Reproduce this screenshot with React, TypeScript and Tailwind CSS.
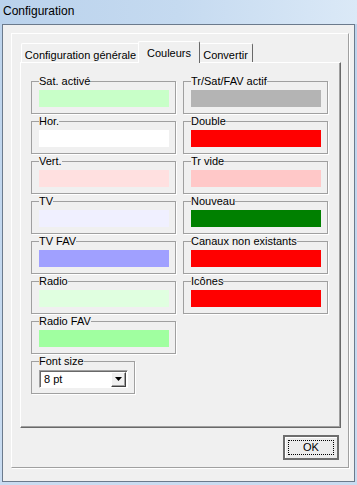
const LEFT = [
  { label: "Sat. activé", color: "bg-[#c8ffc8]" },
  { label: "Hor.", color: "bg-white" },
  { label: "Vert.", color: "bg-[#ffe0e0]" },
  { label: "TV", color: "bg-[#f0f0ff]" },
  { label: "TV FAV", color: "bg-[#a0a0ff]" },
  { label: "Radio", color: "bg-[#e0ffe0]" },
  { label: "Radio FAV", color: "bg-[#a0ffa0]" },
];

const RIGHT = [
  { label: "Tr/Sat/FAV actif", color: "bg-[#b4b4b4]" },
  { label: "Double", color: "bg-[#ff0000]" },
  { label: "Tr vide", color: "bg-[#ffc8c8]" },
  { label: "Nouveau", color: "bg-[#008000]" },
  { label: "Canaux non existants", color: "bg-[#ff0000]" },
  { label: "Icônes", color: "bg-[#ff0000]" },
];

function Group({
  label,
  width,
  children,
}: {
  label: string;
  width: string;
  children: React.ReactNode;
}) {
  return (
    <div
      className={`relative ${width} h-[33px] border border-[#a0a0a0] shadow-[1px_1px_0_#fff] pt-[8px] pl-[7px]`}>
      <span className="absolute -top-[7px] left-[7px] bg-[#f0f0f0] leading-[13px] text-[#000]">
        {label}
      </span>
      {children}
    </div>
  );
}

function ColorGroup({ label, color }: { label: string; color: string }) {
  return (
    <Group label={label} width="w-[145px]">
      <div className={`w-[130px] h-[17px] ${color}`} />
    </Group>
  );
}

function Combo() {
  return (
    <div className="w-[89px] h-[18px] flex items-center bg-white border-t border-l border-[#a0a0a0] border-r border-b border-r-white border-b-white shadow-[inset_1px_1px_0_#696969]">
      <span className="flex-1 pl-[4px] leading-[13px]">8 pt</span>
      <div className="w-[15px] h-[15px] mr-px flex items-center justify-center bg-[#f0f0f0] border-t border-l border-white border-r border-b border-r-[#404040] border-b-[#404040] shadow-[inset_-1px_-1px_0_#a0a0a0]">
        <svg width="7" height="4" viewBox="0 0 7 4">
          <path d="M0 0h7L3.5 4z" fill="#000" />
        </svg>
      </div>
    </div>
  );
}

function Tab({ label, active, width }: { label: string; active?: boolean; width: string }) {
  if (active) {
    return (
      <div
        className={`relative z-10 ${width} h-[22px] -mb-px -mx-[2px] flex items-start justify-center pt-[3px] bg-[#f0f0f0] border-t border-l border-white border-r border-r-[#696969] rounded-t-[2px]`}>
        {label}
      </div>
    );
  }
  return (
    <div
      className={`${width} h-[19px] flex items-start justify-center pt-[3px] bg-[#f0f0f0] border-t border-l border-white border-r border-r-[#696969] rounded-t-[2px]`}>
      {label}
    </div>
  );
}

export default function App() {
  return (
    <div className="w-[357px] h-[485px] flex flex-col bg-gradient-to-b from-[#bcd3ec] to-[#c9dcf1] font-['Liberation_Sans',Arial,sans-serif] text-[11px] text-black">
      <div className="h-[24px] flex items-center pl-[3px] pb-[2px] text-[12px] bg-gradient-to-r from-[#bad2ec] via-[#c5daf0] to-[#dbe9f7]">
        Configuration
      </div>
      <div className="ml-[2px] w-[353px] h-[458px] border border-[#6b7a8c] bg-[#f0f0f0] pl-[8px] pt-[8px]">
        <div className="w-[338px] h-[435px] border-t border-l border-white border-r border-b border-r-[#a0a0a0] border-b-[#a0a0a0] shadow-[1px_1px_0_#fff] pl-[8px] pt-[7px]">
          <div className="w-[321px]">
            <div className="h-[21px] flex items-end pl-px">
              <Tab label="Configuration générale" width="w-[119px]" />
              <Tab label="Couleurs" width="w-[62px]" active />
              <Tab label="Convertir" width="w-[55px]" />
            </div>
            <div className="h-[366px] border-t border-l border-white border-r border-b border-r-[#696969] border-b-[#696969] shadow-[inset_-1px_-1px_0_#a0a0a0] pl-[10px] pt-[18px] flex gap-[7px]">
              <div className="flex flex-col gap-[7px]">
                {LEFT.map((g) => (
                  <ColorGroup key={g.label} label={g.label} color={g.color} />
                ))}
                <Group label="Font size" width="w-[104px]">
                  <Combo />
                </Group>
              </div>
              <div className="flex flex-col gap-[7px]">
                {RIGHT.map((g) => (
                  <ColorGroup key={g.label} label={g.label} color={g.color} />
                ))}
              </div>
            </div>
            <div className="flex justify-end pr-[2px] mt-[7px]">
              <button className="relative w-[56px] h-[25px] border-2 border-[#6e6e6e] bg-[#ececec] shadow-[inset_1px_1px_0_#fff] flex items-center justify-center text-[11px]">
                <span className="absolute inset-[3px] border border-dotted border-black" />
                OK
              </button>
            </div>
          </div>
        </div>
      </div>
    </div>
  );
}
